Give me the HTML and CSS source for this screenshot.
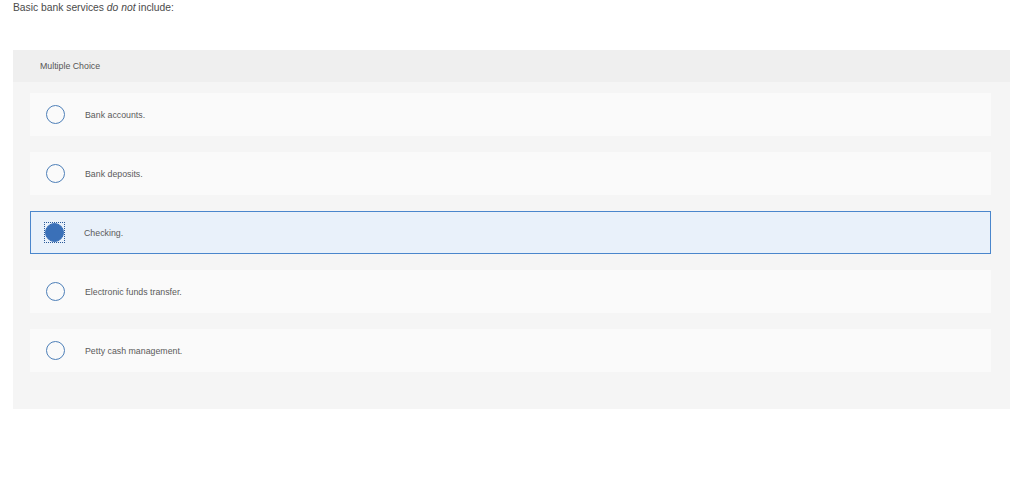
FILE: index.html
```html
<!DOCTYPE html>
<html>
<head>
<meta charset="utf-8">
<link rel="stylesheet" href="styles.css">
</head>
<body>
<div class="question">
  <p class="prompt">Basic bank services <em>do not</em> include:</p>
  <div class="panel">
    <div class="panel-head">Multiple Choice</div>
    <div class="options">
      <div class="option"><span class="radio"></span><span class="label">Bank accounts.</span></div>
      <div class="option"><span class="radio"></span><span class="label">Bank deposits.</span></div>
      <div class="option selected"><span class="focus"><span class="radio"></span></span><span class="label">Checking.</span></div>
      <div class="option"><span class="radio"></span><span class="label">Electronic funds transfer.</span></div>
      <div class="option"><span class="radio"></span><span class="label">Petty cash management.</span></div>
    </div>
  </div>
</div>
</body>
</html>
```
FILE: styles.css
```css
html, body {
  margin: 0;
  padding: 0;
  background: #fff;
}
body {
  font-family: "Liberation Sans", Arial, sans-serif;
  color: #555;
}
.question {
  padding: 0 14px 0 13px;
}
.prompt {
  margin: 0;
  padding-top: 2px;
  height: 50px;
  font-size: 10.3px;
  line-height: 12px;
  color: #4a4a4a;
  box-sizing: border-box;
}
.prompt em {
  font-style: italic;
}
.panel {
  background: #f5f5f5;
}
.panel-head {
  background: #efefef;
  height: 32px;
  padding-left: 27px;
  font-size: 8.8px;
  line-height: 32px;
  color: #555;
}
.options {
  display: flex;
  flex-direction: column;
  gap: 16px;
  padding: 11px 19px 37px 17px;
}
.option {
  height: 43px;
  background: #fafafa;
  display: flex;
  align-items: center;
  box-sizing: border-box;
  padding-left: 16px;
}
.radio {
  width: 19px;
  height: 19px;
  border-radius: 50%;
  border: 1px solid #4d7fb8;
  box-sizing: border-box;
  flex: none;
}
.label {
  margin-left: 20px;
  font-size: 8.8px;
  color: #5a5a5a;
}
.option.selected {
  background: #e9f1fa;
  border: 1px solid #4a86cc;
  padding-left: 14px;
}
.focus {
  display: flex;
  padding: 1px;
  margin-left: -1px;
  outline: 1px dotted #2a5a9a;
  outline-offset: -1px;
  flex: none;
}
.selected .radio {
  background: #3a70b8;
  border-color: #3a70b8;
}
.selected .label {
  margin-left: 19px;
}
```
